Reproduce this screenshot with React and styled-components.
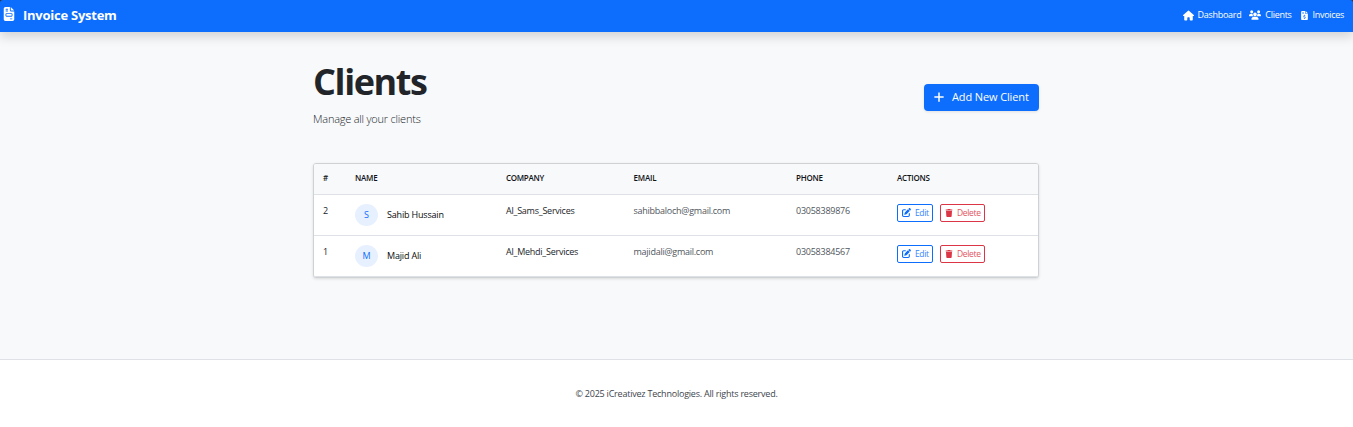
import React from "react";
import styled, { createGlobalStyle } from "styled-components";
import {
  FaFileInvoice,
  FaFileInvoiceDollar,
  FaHouse,
  FaUsers,
  FaPlus,
  FaPenToSquare,
  FaTrash,
} from "react-icons/fa6";

const GlobalStyle = createGlobalStyle`
  *, *::before, *::after { box-sizing: border-box; }
  body {
    margin: 0;
    background: #f8f9fb;
    color: #212529;
    font-family: "Segoe UI", "Open Sans", "Noto Sans", sans-serif;
    font-size: 9px;
    line-height: 14px;
    white-space: nowrap;
  }
  svg { display: block; flex: none; }
`;

const Page = styled.div`
  display: flex;
  flex-direction: column;
  height: 427px;
  overflow: hidden;
`;

const Header = styled.header`
  flex: none;
  background: #2b3445;
  box-shadow: 0 5px 11px rgba(0, 0, 0, 0.15);
`;

const Navbar = styled.nav`
  display: flex;
  align-items: center;
  justify-content: space-between;
  height: 32px;
  padding: 0 9px 2px 2px;
  border-radius: 3px 3px 0 0;
  background: #0d6efd;
  color: #fff;
`;

const Brand = styled.div`
  display: flex;
  align-items: center;
  gap: 7px;
  font-size: 13px;
  font-weight: 700;
  letter-spacing: -0.25px;

  svg { margin-top: -2px; }
`;

const NavLinks = styled.div`
  display: flex;
  gap: 8px;
`;

const NavLink = styled.a`
  display: flex;
  align-items: center;
  gap: 4px;
  font-size: 9px;
  font-weight: 500;
  letter-spacing: ${(p) => p.$tracking || "-0.2px"};
`;

const Main = styled.main`
  flex: none;
  width: 726px;
  height: 327px;
  margin-left: 313px;
  padding-top: 28px;
`;

const Heading = styled.div`
  display: flex;
  justify-content: space-between;
  align-items: flex-start;
  height: 75px;
`;

const Title = styled.h1`
  margin: 0 0 7px;
  font-size: 36px;
  line-height: 44px;
  font-weight: 700;
  letter-spacing: -1.4px;
`;

const Lead = styled.p`
  margin: 0;
  font-size: 11px;
  line-height: 15px;
  font-weight: 300;
  letter-spacing: -0.22px;
`;

const AddButton = styled.button`
  display: flex;
  align-items: center;
  gap: 7px;
  width: 115px;
  height: 27px;
  margin-top: 24px;
  padding: 0 0 2px 9px;
  border: 0;
  border-radius: 4px;
  background: #0d6efd;
  box-shadow: 0 1px 3px rgba(0, 0, 0, 0.1);
  color: #fff;
  font: inherit;
  font-size: 11px;
  font-weight: 500;
  letter-spacing: -0.12px;
`;

const Card = styled.section`
  margin-top: 28px;
  height: 115px;
  border: 1px solid #cfd2d4;
  border-radius: 3px;
  background: #fff;
  box-shadow: 0 1px 3px rgba(0, 0, 0, 0.12);
  overflow: hidden;
`;

const Row = styled.div`
  display: grid;
  grid-template-columns: 32px 151px 127.5px 162.5px 101px 1fr;
  height: 41px;
  padding: 9px 0 0 9px;
  border-bottom: 1px solid #dee2e6;
`;

const HeadRow = styled(Row)`
  height: 31px;
  padding-top: 7px;
  background: #f8f9fb;
  font-size: 8px;
  font-weight: 600;
  color: #111417;
`;

const HeadCell = styled.div`
  letter-spacing: ${(p) => p.$tracking || "-0.22px"};
`;

const Cell = styled.div`
  color: ${(p) => (p.$muted ? "#50565c" : "#212529")};
  letter-spacing: ${(p) => p.$tracking || "-0.25px"};
`;

const Person = styled.div`
  display: flex;
  align-items: center;
  gap: 9px;
  height: 22px;
  font-weight: 500;
  color: #08090b;
  letter-spacing: -0.18px;
`;

const Avatar = styled.span`
  display: flex;
  align-items: center;
  justify-content: center;
  width: 23px;
  height: 22px;
  border-radius: 50%;
  background: #e7f0ff;
  color: #0d6efd;
`;

const Actions = styled.div`
  display: flex;
  gap: 7px;
`;

const ActionButton = styled.button`
  display: flex;
  align-items: center;
  gap: 4px;
  width: ${(p) => p.$width};
  height: 18px;
  padding: 0 0 1px 4px;
  border: 1px solid ${(p) => p.$color};
  border-radius: 2px;
  background: transparent;
  color: ${(p) => p.$color};
  font: inherit;
  font-size: 8.5px;
  letter-spacing: -0.35px;
`;

const Label = styled.span`
  opacity: 0.85;
`;

const Footer = styled.footer`
  flex: 1;
  padding-top: 27px;
  border-top: 1px solid #dee2e6;
  background: #fff;
  text-align: center;
  color: #40464c;
  letter-spacing: -0.22px;
`;

const clients = [
  { id: 2, initial: "S", name: "Sahib Hussain", company: "Al_Sams_Services", email: "sahibbaloch@gmail.com", phone: "03058389876" },
  { id: 1, initial: "M", name: "Majid Ali", company: "Al_Mehdi_Services", email: "majidali@gmail.com", phone: "03058384567" },
];

export default function App() {
  return (
    <Page>
      <GlobalStyle />
      <Header>
        <Navbar>
          <Brand>
            <FaFileInvoice size={14} />
            <span>Invoice System</span>
          </Brand>
          <NavLinks>
            <NavLink $tracking="-0.3px"><FaHouse size={11} /><span>Dashboard</span></NavLink>
            <NavLink $tracking="-0.3px"><FaUsers size={12} /><span>Clients</span></NavLink>
            <NavLink $tracking="-0.3px"><FaFileInvoiceDollar size={9} /><span>Invoices</span></NavLink>
          </NavLinks>
        </Navbar>
      </Header>
      <Main>
        <Heading>
          <div>
            <Title>Clients</Title>
            <Lead>Manage all your clients</Lead>
          </div>
          <AddButton><FaPlus size={12} /><span>Add New Client</span></AddButton>
        </Heading>
        <Card>
          <HeadRow>
            <HeadCell>#</HeadCell>
            <HeadCell>NAME</HeadCell>
            <HeadCell $tracking="-0.3px">COMPANY</HeadCell>
            <HeadCell>EMAIL</HeadCell>
            <HeadCell>PHONE</HeadCell>
            <HeadCell>ACTIONS</HeadCell>
          </HeadRow>
          {clients.map((c) => (
            <Row key={c.id}>
              <Cell>{c.id}</Cell>
              <Person><Avatar>{c.initial}</Avatar><span>{c.name}</span></Person>
              <Cell>{c.company}</Cell>
              <Cell $muted>{c.email}</Cell>
              <Cell $muted>{c.phone}</Cell>
              <Actions>
                <ActionButton $color="#0d6efd" $width="36px"><FaPenToSquare size={9} /><Label>Edit</Label></ActionButton>
                <ActionButton $color="#dc3545" $width="45px"><FaTrash size={8} /><Label>Delete</Label></ActionButton>
              </Actions>
            </Row>
          ))}
        </Card>
      </Main>
      <Footer>© 2025 iCreativez Technologies. All rights reserved.</Footer>
    </Page>
  );
}
